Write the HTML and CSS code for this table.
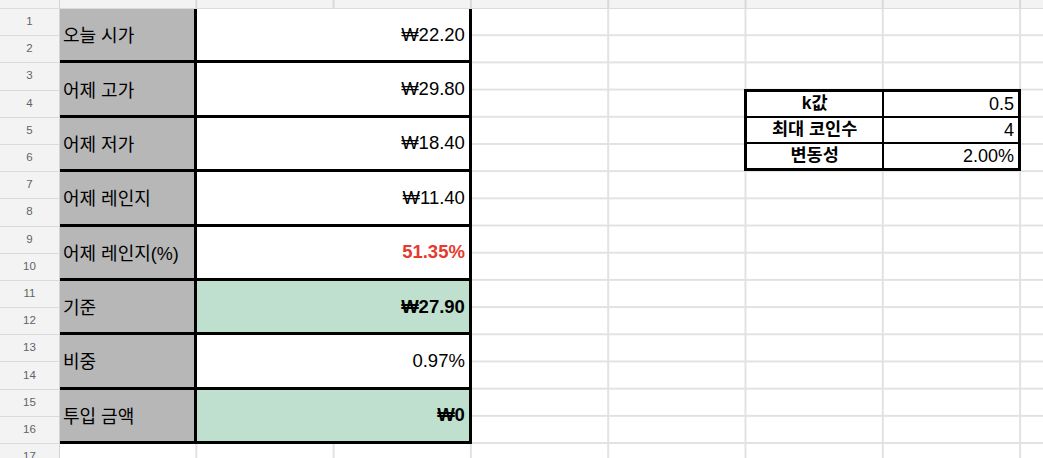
FILE: index.html
```html
<!DOCTYPE html>
<html lang="ko">
<head>
<meta charset="utf-8">
<title>Sheet</title>
<link rel="stylesheet" href="styles.css">
</head>
<body>
<div class="sheet">
  <div class="corner"></div>
  <div class="colhead"></div>
  <div class="rowhead">
    <div class="rn">1</div><div class="rn">2</div><div class="rn">3</div><div class="rn">4</div>
    <div class="rn">5</div><div class="rn">6</div><div class="rn">7</div><div class="rn">8</div>
    <div class="rn">9</div><div class="rn">10</div><div class="rn">11</div><div class="rn">12</div>
    <div class="rn">13</div><div class="rn">14</div><div class="rn">15</div><div class="rn">16</div>
    <div class="rn">17</div>
  </div>
  <div class="cells"></div>
  <div class="block">
    <div class="lab">오늘 시가</div><div class="val">₩22.20</div>
    <div class="lab">어제 고가</div><div class="val">₩29.80</div>
    <div class="lab">어제 저가</div><div class="val">₩18.40</div>
    <div class="lab">어제 레인지</div><div class="val">₩11.40</div>
    <div class="lab">어제 레인지(%)</div><div class="val red">51.35%</div>
    <div class="lab">기준</div><div class="val green bold">₩27.90</div>
    <div class="lab">비중</div><div class="val">0.97%</div>
    <div class="lab">투입 금액</div><div class="val green bold">₩0</div>
  </div>
  <div class="params">
    <div class="pk">k값</div><div class="pv">0.5</div>
    <div class="pk">최대 코인수</div><div class="pv">4</div>
    <div class="pk">변동성</div><div class="pv">2.00%</div>
  </div>
</div>
</body>
</html>
```
FILE: styles.css
```css
html, body {
  margin: 0;
  padding: 0;
  background: #fff;
}
body {
  font-family: "Liberation Sans", "Noto Sans CJK KR", sans-serif;
  color: #000;
  overflow: hidden;
}
.sheet {
  display: grid;
  grid-template-columns: 60px repeat(7, 137.3px) 1fr;
  grid-template-rows: 9px repeat(17, 27.2px);
  width: 1043px;
  height: 458px;
  overflow: hidden;
}
.corner {
  grid-column: 1;
  grid-row: 1;
  background: #f3f3f3;
  border-right: 1px solid #d4d4d4;
  border-bottom: 1px solid #dcdcdc;
  box-sizing: border-box;
}
.colhead {
  grid-column: 2 / -1;
  grid-row: 1;
  background-color: #f3f3f3;
  background-image: linear-gradient(to right, transparent calc(137.3px - 2px), #d9d9d9 0);
  background-size: 137.3px 100%;
  border-bottom: 1px solid #dcdcdc;
  box-sizing: border-box;
}
.rowhead {
  grid-column: 1;
  grid-row: 2 / -1;
  display: grid;
  grid-template-rows: repeat(17, 27.2px);
  background: #f3f3f3;
  border-right: 1px solid #d4d4d4;
}
.rn {
  display: flex;
  align-items: center;
  justify-content: center;
  padding-bottom: 2px;
  box-sizing: border-box;
  border-bottom: 1.5px solid #dadada;
  font-size: 11.5px;
  color: #5f6368;
}
.cells {
  grid-column: 2 / -1;
  grid-row: 2 / -1;
  background-image:
    linear-gradient(to right, transparent calc(137.3px - 2px), #e2e2e2 0),
    linear-gradient(to bottom, transparent calc(27.2px - 2px), #e2e2e2 0);
  background-size: 137.3px 100%, 100% 27.2px;
}
.block {
  grid-column: 2 / 5;
  grid-row: 2 / 18;
  display: grid;
  grid-template-columns: 134px 1fr;
  grid-template-rows: repeat(8, minmax(0, 1fr));
  gap: 3px;
  background: #000;
  border-right: 3px solid #000;
  border-bottom: 3px solid #000;
  box-sizing: border-box;
}
.lab {
  background: #b7b7b7;
  display: flex;
  align-items: center;
  padding-left: 3px;
  padding-bottom: 1px;
  font-size: 18px;
  white-space: nowrap;
}
.val {
  background: #fff;
  display: flex;
  align-items: center;
  justify-content: flex-end;
  padding-right: 4px;
  font-size: 18.5px;
  white-space: nowrap;
}
.val.red {
  color: #e63a2e;
  font-weight: bold;
}
.val.green {
  background: #c0e0cf;
}
.val.bold {
  font-weight: bold;
}
.params {
  grid-column: 7 / 9;
  grid-row: 5 / 8;
  margin: -2px 0 1px -2px;
  display: grid;
  grid-template-columns: 1fr 1fr;
  grid-template-rows: repeat(3, minmax(0, 1fr));
  gap: 2px;
  background: #000;
  border: 3px solid #000;
  box-sizing: border-box;
  line-height: 1;
}
.pk {
  background: #fff;
  display: flex;
  align-items: center;
  justify-content: center;
  min-height: 0;
  font-size: 17.5px;
  font-weight: bold;
  white-space: nowrap;
}
.pv {
  background: #fff;
  display: flex;
  align-items: center;
  justify-content: flex-end;
  min-height: 0;
  padding-right: 4px;
  font-size: 18px;
  white-space: nowrap;
}
```
